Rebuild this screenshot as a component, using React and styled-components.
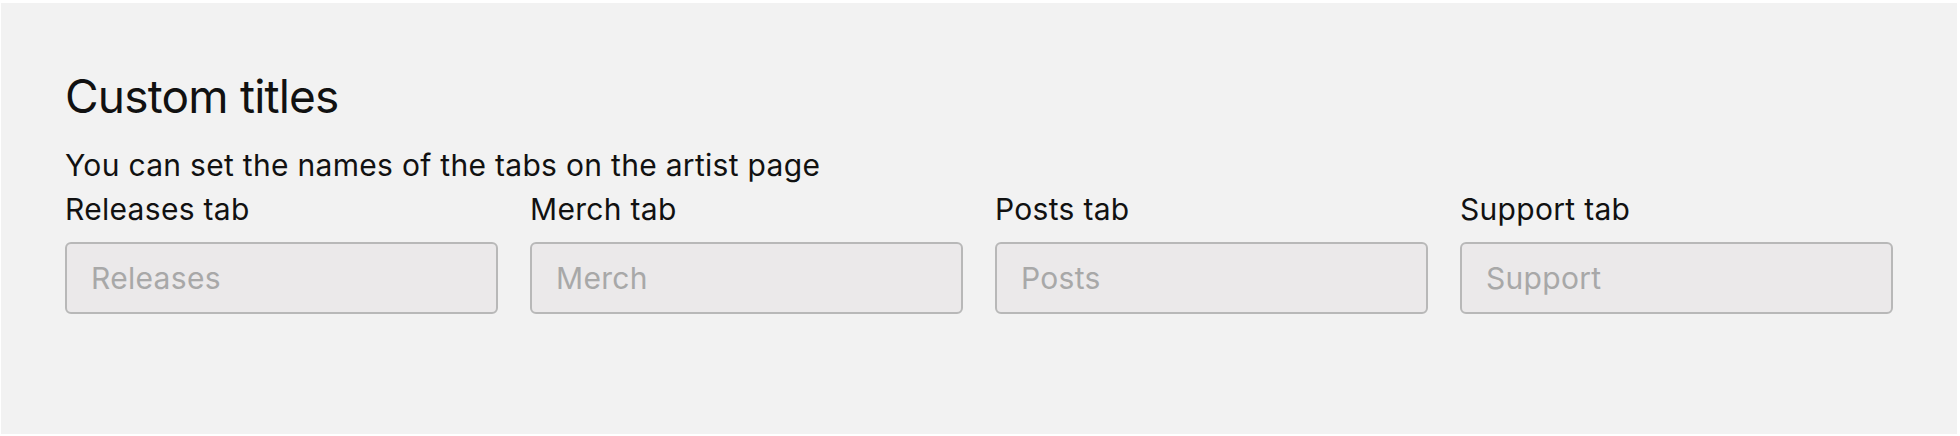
import React from "react";
import styled, { createGlobalStyle } from "styled-components";

const GlobalStyle = createGlobalStyle`
  html, body {
    margin: 0;
    padding: 0;
    background: #ffffff;
  }
  body {
    font-family: Inter, "Noto Sans", "Liberation Sans", sans-serif;
    color: #111111;
  }
`;

const tabs = [
  { label: "Releases tab", placeholder: "Releases" },
  { label: "Merch tab", placeholder: "Merch" },
  { label: "Posts tab", placeholder: "Posts" },
  { label: "Support tab", placeholder: "Support" },
];

export default function App() {
  return (
    <>
      <GlobalStyle />
      <Page>
        <Panel>
          <Title>Custom titles</Title>
          <Description>You can set the names of the tabs on the artist page</Description>
          <Fields>
            {tabs.map((tab) => (
              <Field key={tab.label}>
                <Label>{tab.label}</Label>
                <Input type="text" placeholder={tab.placeholder} />
              </Field>
            ))}
          </Fields>
        </Panel>
      </Page>
    </>
  );
}

const Page = styled.div`
  padding: 3px 3px 2px 1px;
`;

const Panel = styled.section`
  box-sizing: border-box;
  height: 431px;
  padding: 65px 64px 0;
  background: #f2f2f2;
`;

const Title = styled.h2`
  margin: 0;
  font-size: 46px;
  line-height: 56px;
  font-weight: 400;
  letter-spacing: -0.8px;
  color: #111111;
`;

const Description = styled.p`
  margin: 23px 0 0;
  font-size: 30px;
  line-height: 36px;
  letter-spacing: 0.3px;
  color: #111111;
`;

const Fields = styled.div`
  display: grid;
  grid-template-columns: repeat(4, 1fr);
  column-gap: 32px;
  margin-top: 8px;
`;

const Field = styled.label`
  display: flex;
  flex-direction: column;
  gap: 15px;
`;

const Label = styled.span`
  font-size: 30px;
  line-height: 36px;
  letter-spacing: 0.3px;
  color: #111111;
`;

const Input = styled.input`
  box-sizing: border-box;
  width: 100%;
  height: 72px;
  padding: 0 24px;
  border: 2px solid #b8b8b8;
  border-radius: 6px;
  background: #ebe9ea;
  font-family: inherit;
  font-size: 30px;
  letter-spacing: 0.3px;
  color: #111111;
  outline: none;

  &::placeholder {
    color: #a8a8a8;
  }
`;
